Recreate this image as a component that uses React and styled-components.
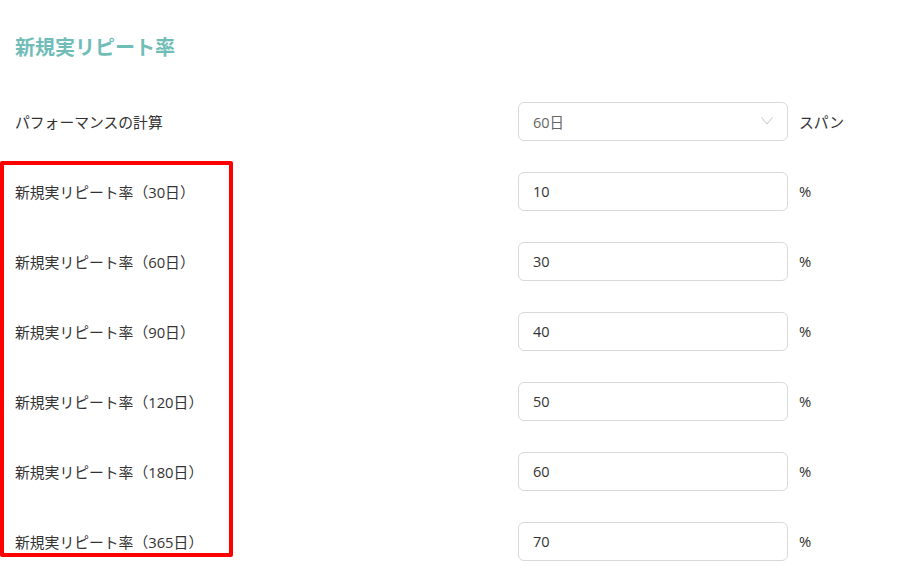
import React from "react";
import styled, { createGlobalStyle } from "styled-components";

const Global = createGlobalStyle`
  html, body { margin: 0; padding: 0; background: #fff; }
  body { font-family: "Open Sans", "Noto Sans CJK JP", sans-serif; color: #333; }
`;

const Page = styled.div`
  position: relative;
  width: 910px;
  height: 583px;
  padding: 33px 15px 0;
  box-sizing: border-box;
  overflow: hidden;
`;

const Title = styled.h2`
  margin: 0 0 25px;
  font-size: 20px;
  line-height: 28px;
  font-weight: 700;
  color: #70bdb8;
  font-family: "Noto Sans CJK JP", sans-serif;
`;

const Form = styled.div`
  display: grid;
  grid-template-columns: 492px 270px auto;
  grid-auto-rows: 70px;
  align-items: center;
  column-gap: 11px;
`;

const Label = styled.div`
  font-size: 14.8px;
  font-family: "Open Sans", "Noto Sans CJK JP", sans-serif;
  color: #333;
`;

const Field = styled.div`
  position: relative;
  height: 39px;
  box-sizing: border-box;
  border: 1px solid #d9d9d9;
  border-radius: 6px;
  display: flex;
  align-items: center;
  padding: 0 14px;
  font-size: 14.5px;
  color: ${(p) => (p.$muted ? "#666" : "#333")};
  background: #fff;
`;

const Chevron = styled.svg`
  position: absolute;
  right: 14px;
  top: 50%;
  margin-top: -4px;
`;

const Unit = styled.div`
  font-size: 14.8px;
  color: #333;
`;

const Highlight = styled.div`
  position: absolute;
  left: 0;
  top: 161px;
  width: 233px;
  height: 396px;
  box-sizing: border-box;
  border: 4px solid #ff0000;
  border-radius: 2px;
  pointer-events: none;
`;

const rows = [
  ["30日", "10"],
  ["60日", "30"],
  ["90日", "40"],
  ["120日", "50"],
  ["180日", "60"],
  ["365日", "70"],
];

export default function App() {
  return (
    <Page>
      <Global />
      <Title>新規実リピート率</Title>
      <Form>
        <Label>パフォーマンスの計算</Label>
        <Field $muted>
          60日
          <Chevron width="12" height="8" viewBox="0 0 12 8">
            <path d="M0.5 0.5 L6 7 L11.5 0.5" fill="none" stroke="#c4c4c4" strokeWidth="1" />
          </Chevron>
        </Field>
        <Unit>スパン</Unit>
        {rows.map(([d, v]) => (
          <React.Fragment key={d}>
            <Label>新規実リピート率（{d}）</Label>
            <Field>{v}</Field>
            <Unit>%</Unit>
          </React.Fragment>
        ))}
      </Form>
      <Highlight />
    </Page>
  );
}
